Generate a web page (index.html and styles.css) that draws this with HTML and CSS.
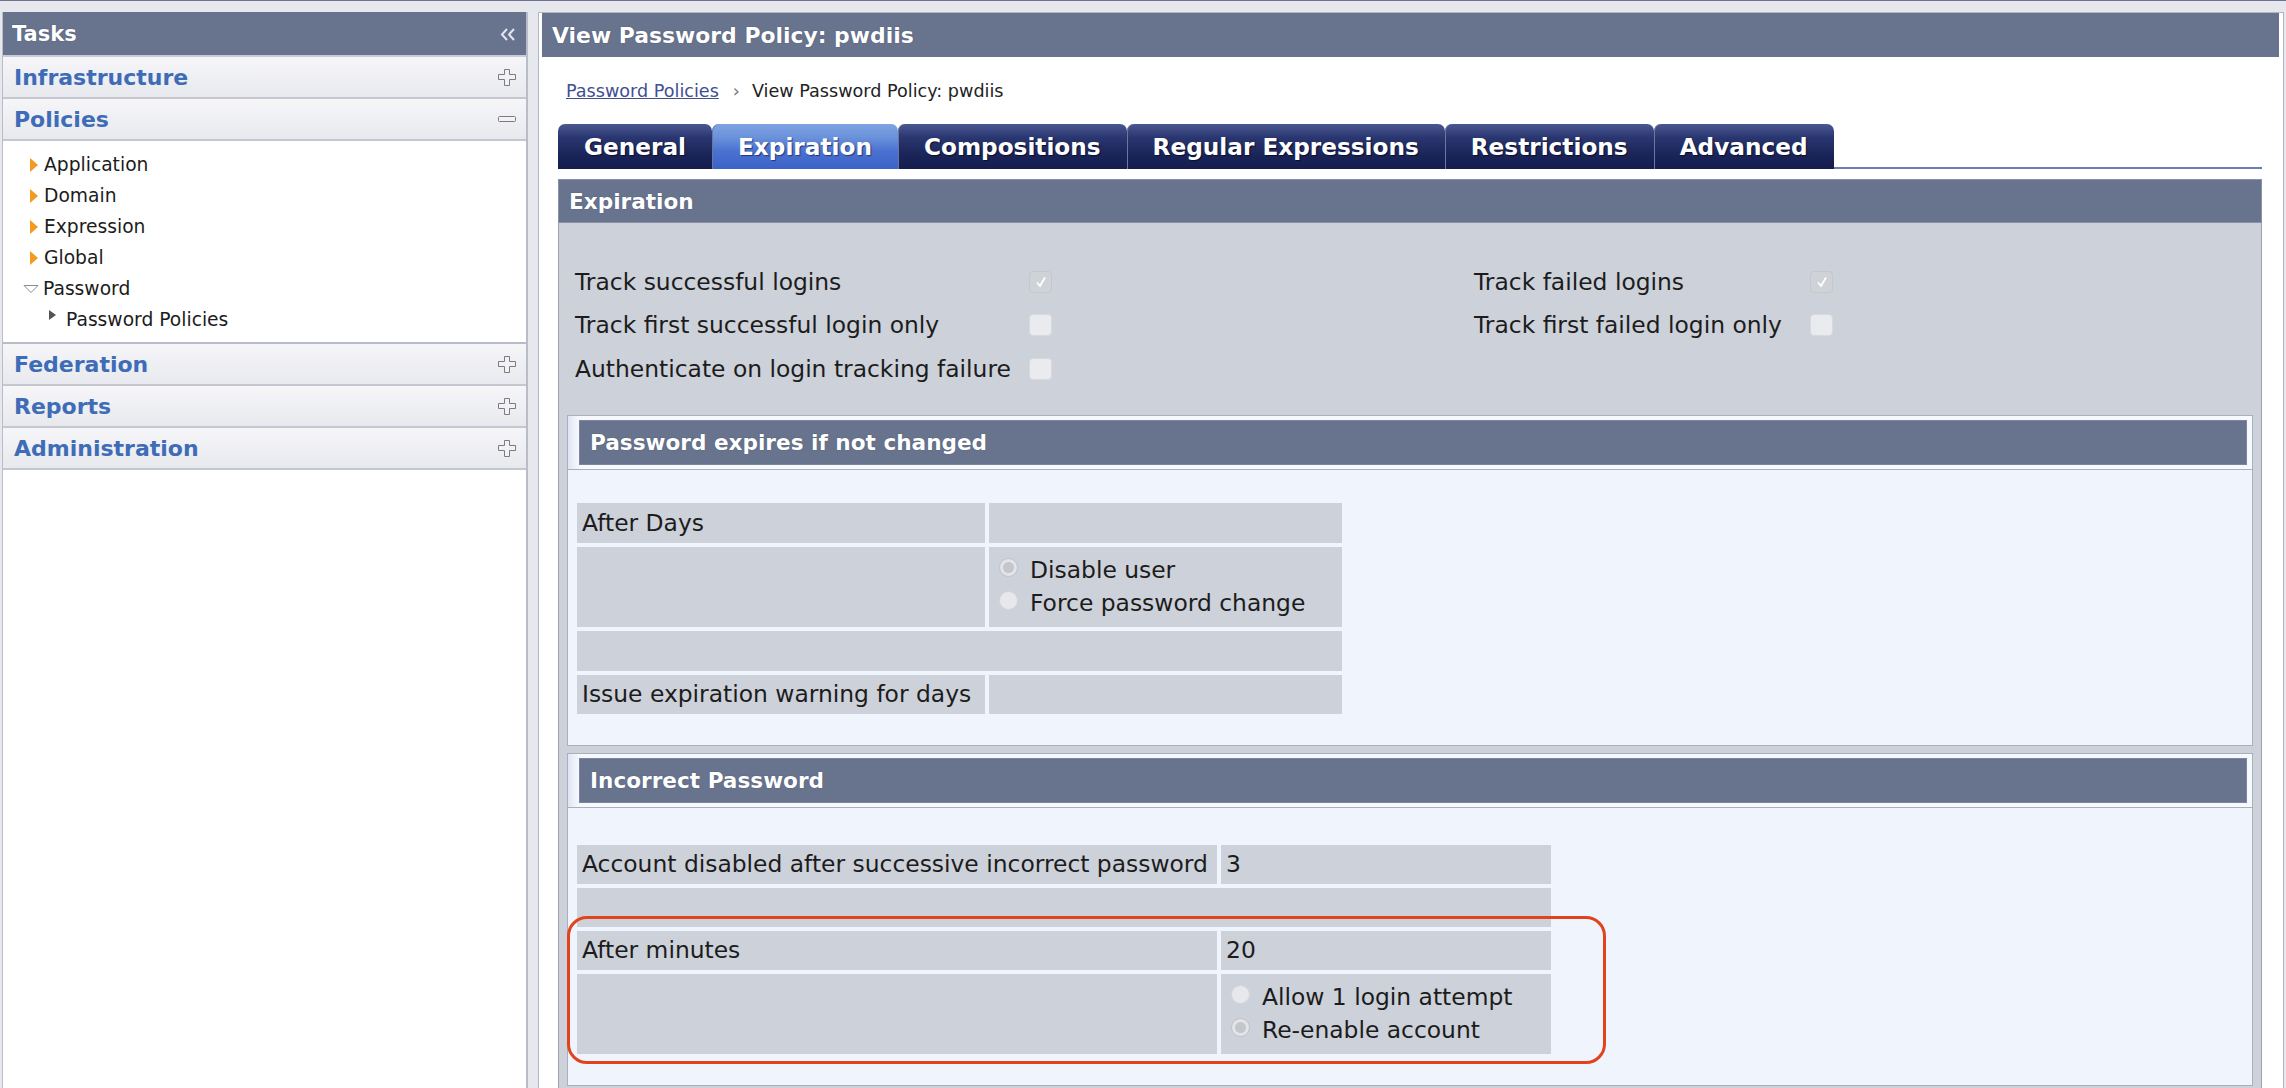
FILE: index.html
```html
<!DOCTYPE html>
<html>
<head>
<meta charset="utf-8">
<title>View Password Policy: pwdiis</title>
<link rel="stylesheet" href="styles.css">
</head>
<body>
<div class="page">
  <aside class="left">
    <div class="tasks-head">
      <span>Tasks</span>
      <svg class="collapse" width="16" height="13" viewBox="0 0 16 13"><polyline points="7,1 2,6.5 7,12" fill="none" stroke="#e3e6ef" stroke-width="2"/><polyline points="14,1 9,6.5 14,12" fill="none" stroke="#e3e6ef" stroke-width="2"/></svg>
    </div>
    <div class="acc-row"><span>Infrastructure</span><svg class="pm" width="18" height="17" viewBox="0 0 18 17"><polygon points="6.5,0.5 11.5,0.5 11.5,5.5 17.5,5.5 17.5,10.5 11.5,10.5 11.5,16.5 6.5,16.5 6.5,10.5 0.5,10.5 0.5,5.5 6.5,5.5" fill="#f2f2f4" stroke="#7c7c80"/></svg></div>
    <div class="acc-row"><span>Policies</span><svg class="pm" width="18" height="17" viewBox="0 0 18 17"><rect x="0.5" y="5.5" width="17" height="5" rx="1" fill="#f2f2f4" stroke="#7c7c80"/></svg></div>
    <ul class="tree">
      <li><span class="tri-o"></span>Application</li>
      <li><span class="tri-o"></span>Domain</li>
      <li><span class="tri-o"></span>Expression</li>
      <li><span class="tri-o"></span>Global</li>
      <li class="open"><svg class="tri-down" width="16" height="10" viewBox="0 0 16 10"><polygon points="1,1.5 15,1.5 8,8.5" fill="#fff" stroke="#8c8c8c"/></svg>Password</li>
      <li class="sub"><span class="tri-d"></span>Password Policies</li>
    </ul>
    <div class="acc-row"><span>Federation</span><svg class="pm" width="18" height="17" viewBox="0 0 18 17"><polygon points="6.5,0.5 11.5,0.5 11.5,5.5 17.5,5.5 17.5,10.5 11.5,10.5 11.5,16.5 6.5,16.5 6.5,10.5 0.5,10.5 0.5,5.5 6.5,5.5" fill="#f2f2f4" stroke="#7c7c80"/></svg></div>
    <div class="acc-row"><span>Reports</span><svg class="pm" width="18" height="17" viewBox="0 0 18 17"><polygon points="6.5,0.5 11.5,0.5 11.5,5.5 17.5,5.5 17.5,10.5 11.5,10.5 11.5,16.5 6.5,16.5 6.5,10.5 0.5,10.5 0.5,5.5 6.5,5.5" fill="#f2f2f4" stroke="#7c7c80"/></svg></div>
    <div class="acc-row"><span>Administration</span><svg class="pm" width="18" height="17" viewBox="0 0 18 17"><polygon points="6.5,0.5 11.5,0.5 11.5,5.5 17.5,5.5 17.5,10.5 11.5,10.5 11.5,16.5 6.5,16.5 6.5,10.5 0.5,10.5 0.5,5.5 6.5,5.5" fill="#f2f2f4" stroke="#7c7c80"/></svg></div>
    <div class="left-fill"></div>
  </aside>

  <main class="main">
    <div class="title-bar">View Password Policy: pwdiis</div>
    <div class="content">
      <div class="crumbs"><a href="#">Password Policies</a><span class="sep">›</span><span>View Password Policy: pwdiis</span></div>
      <div class="tabs">
        <div class="tab">General</div>
        <div class="tab active">Expiration</div>
        <div class="tab">Compositions</div>
        <div class="tab">Regular Expressions</div>
        <div class="tab">Restrictions</div>
        <div class="tab">Advanced</div>
      </div>
      <section class="sec">
        <div class="sec-head">Expiration</div>
        <div class="sec-body">
          <div class="checks">
            <span>Track successful logins</span><span class="cb on"><svg width="12" height="12" viewBox="0 0 12 12"><polyline points="2,6.5 5,10 10,1.5" fill="none" stroke="#fff" stroke-width="1.8"/></svg></span>
            <span></span>
            <span>Track failed logins</span><span class="cb on"><svg width="12" height="12" viewBox="0 0 12 12"><polyline points="2,6.5 5,10 10,1.5" fill="none" stroke="#fff" stroke-width="1.8"/></svg></span>
            <span>Track first successful login only</span><span class="cb"></span>
            <span></span>
            <span>Track first failed login only</span><span class="cb"></span>
            <span>Authenticate on login tracking failure</span><span class="cb"></span>
            <span></span><span></span><span></span>
          </div>

          <div class="box">
            <div class="box-head-wrap"><div class="box-head">Password expires if not changed</div></div>
            <div class="box-body">
              <div class="grid g1">
                <div class="cell">After Days</div><div class="cell"></div>
                <div class="cell"></div>
                <div class="cell radios">
                  <div class="ropt"><span class="rd on"></span>Disable user</div>
                  <div class="ropt"><span class="rd"></span>Force password change</div>
                </div>
                <div class="cell span2"></div>
                <div class="cell">Issue expiration warning for days</div><div class="cell"></div>
              </div>
            </div>
          </div>

          <div class="box box2">
            <div class="box-head-wrap"><div class="box-head">Incorrect Password</div></div>
            <div class="box-body">
              <div class="grid g2">
                <div class="cell">Account disabled after successive incorrect password</div><div class="cell">3</div>
                <div class="cell span2"></div>
                <div class="cell">After minutes</div><div class="cell">20</div>
                <div class="cell"></div>
                <div class="cell radios">
                  <div class="ropt"><span class="rd"></span>Allow 1 login attempt</div>
                  <div class="ropt"><span class="rd on"></span>Re-enable account</div>
                </div>
                <div class="highlight"></div>
              </div>
            </div>
          </div>
        </div>
      </section>
    </div>
  </main>
</div>
</body>
</html>
```

FILE: styles.css
```css
html, body {
  margin: 0;
  padding: 0;
  height: 100%;
  overflow: hidden;
}
body {
  background: #e7e8ee;
  border-top: 1px solid #6c7290;
  font-family: "DejaVu Sans", Verdana, sans-serif;
  color: #1c1c1c;
  box-sizing: border-box;
}
.page {
  display: flex;
  align-items: stretch;
  gap: 10px;
  padding: 11px 2px 0 2px;
  height: 1088px;
  box-sizing: border-box;
}

/* ---------- left task panel ---------- */
.left {
  width: 526px;
  flex: none;
  display: flex;
  flex-direction: column;
  background: #fff;
  border-left: 1px solid #b9bdc8;
  border-right: 2px solid #b9bdc8;
  box-sizing: border-box;
}
.left > * { flex-shrink: 0; }
.tasks-head {
  height: 43px;
  background: #68738e;
  color: #fff;
  font-weight: bold;
  font-size: 21px;
  display: flex;
  align-items: center;
  justify-content: space-between;
  padding: 0 10px 0 9px;
  border-bottom: 2px solid #c9ccd6;
  text-shadow: 0 0 1px #3b4360;
}
.collapse { margin-top: 1px; }
.acc-row {
  height: 40px;
  display: flex;
  align-items: center;
  justify-content: space-between;
  padding: 0 10px 0 11px;
  background: linear-gradient(#f6f6f9, #e8e9ee);
  border-bottom: 2px solid #c4c7d0;
  color: #3e6cb7;
  font-weight: bold;
  font-size: 22px;
}
.pm { flex: none; }
.tree {
  list-style: none;
  margin: 0;
  padding: 8px 0 7px 0;
  border-bottom: 2px solid #b8bcc6;
  font-size: 18.7px;
}
.tree li {
  height: 31px;
  display: flex;
  align-items: center;
  padding-left: 27px;
}
.tri-o {
  width: 0;
  height: 0;
  border-left: 8px solid #f29b1e;
  border-top: 7.5px solid transparent;
  border-bottom: 7.5px solid transparent;
  margin-right: 6px;
}
.tree li.open { padding-left: 20px; }
.tri-down { margin-right: 4px; }
.tree li.sub { padding-left: 46px; }
.tri-d {
  width: 0;
  height: 0;
  border-left: 7px solid #555;
  border-top: 5.5px solid transparent;
  border-bottom: 5.5px solid transparent;
  margin-right: 10px;
  margin-top: -9px;
}
.left-fill { flex: 1 1 auto; }

/* ---------- main panel ---------- */
.main {
  flex: 1;
  display: block;
  background: #fff;
  border: 1px solid #b3b7c3;
  border-bottom: none;
  min-width: 0;
  overflow: hidden;
}
.title-bar {
  height: 44px;
  margin: 0 4px 0 3px;
  background: #68738e;
  color: #fff;
  font-weight: bold;
  font-size: 21.9px;
  display: flex;
  align-items: center;
  padding-left: 10px;
  text-shadow: 0 0 1px #3b4360;
}
.content {
  padding: 0 21px 0 19px;
}
.crumbs {
  height: 67px;
  display: flex;
  align-items: center;
  padding-left: 8px;
  font-size: 17.6px;
  color: #222;
}
.crumbs a {
  color: #3f4f8f;
  text-decoration: underline;
}
.crumbs .sep {
  color: #777;
  margin: 0 12px 0 14px;
}

.tabs {
  display: flex;
  border-bottom: 2px solid #6f7cb4;
  height: 43px;
}
.tab {
  height: 45px;
  box-sizing: border-box;
  padding: 0 26px 0 26px;
  display: flex;
  align-items: center;
  font-weight: bold;
  font-size: 23.2px;
  color: #fff;
  border-radius: 7px 7px 0 0;
  background: linear-gradient(#4a5890 0%, #2a3670 30%, #1a2458 70%, #141d4e 100%);
  box-shadow: inset 1px 0 0 #6c76a0;
  text-shadow: 1px 1px 1px #0a0f30;
}
.tab:first-child { box-shadow: none; }
.tab.active {
  background: linear-gradient(#7fa3e2 0%, #6a91da 30%, #4a72d0 60%, #3c62c8 100%);
  text-shadow: 1px 1px 1px #22367a;
}

.sec {
  margin-top: 10px;
}
.sec-head {
  height: 44px;
  box-sizing: border-box;
  background: #68738e;
  border: 1px solid #8b92a6;
  color: #fff;
  font-weight: bold;
  font-size: 21.6px;
  display: flex;
  align-items: center;
  padding-left: 10px;
  text-shadow: 0 0 1px #3b4360;
}
.sec-body {
  background: #cdd1d9;
  border-left: 1px solid #9ca2b0;
  border-right: 1px solid #9ca2b0;
  padding: 37px 8px 30px 8px;
}

.checks {
  display: grid;
  grid-template-columns: 454px 23px 422px 336px 23px;
  grid-auto-rows: 43.5px;
  align-items: center;
  margin-left: 8px;
  font-size: 23.4px;
}
.cb {
  width: 23px;
  height: 22px;
  box-sizing: border-box;
  border-radius: 4px;
  background: #e9ebef;
  border: 1px solid #d6d9de;
  display: flex;
  align-items: center;
  justify-content: center;
}
.cb.on {
  background: #cfd2d7;
  border-color: #c4c7cd;
}

.box {
  margin-top: 24px;
  background: #f0f5fd;
  border: 1px solid #a9afbc;
}
.box2 { margin-top: 7px; }
.box-head-wrap {
  padding: 4px 5px 4px 11px;
  background: linear-gradient(90deg, #dfe6f3 0px, #f6f9fe 11px, #f6f9fe 100%);
  border-bottom: 1px solid #a9afbc;
}
.box-head {
  height: 45px;
  box-sizing: border-box;
  background: #68738e;
  border: 1px solid #7d86a0;
  color: #fff;
  font-weight: bold;
  font-size: 21.6px;
  display: flex;
  align-items: center;
  padding-left: 10px;
  text-shadow: 0 0 1px #3b4360;
}
.box-body {
  padding: 33px 0 31px 9px;
}
.box2 .box-body { padding-top: 37px; }
.grid {
  display: grid;
  gap: 4px;
  font-size: 23.4px;
  position: relative;
  width: max-content;
}
.g1 {
  grid-template-columns: 408px 353px;
  grid-template-rows: 40px 80px 40px 39px;
}
.g2 {
  grid-template-columns: 640px 330px;
  grid-template-rows: 39px 39px 39px 80px;
}
.cell {
  background: #cdd1d9;
  display: flex;
  align-items: center;
  padding-left: 5px;
  white-space: nowrap;
}
.span2 { grid-column: span 2; }
.radios {
  flex-direction: column;
  align-items: flex-start;
  justify-content: center;
  padding-left: 10px;
}
.ropt {
  height: 33px;
  display: flex;
  align-items: center;
}
.rd {
  width: 19px;
  height: 19px;
  box-sizing: border-box;
  border-radius: 50%;
  background: #e6e8ec;
  border: 1px solid #d3d6db;
  margin-right: 12px;
  margin-top: -6px;
}
.rd.on {
  background: radial-gradient(circle, #c3c6cc 0 5px, #e2e4e8 6px);
  border-color: #bfc3c9;
}
.highlight {
  position: absolute;
  left: -10px;
  top: 71px;
  width: 1039px;
  height: 148px;
  box-sizing: border-box;
  border: 3px solid #e2431c;
  border-radius: 20px;
  pointer-events: none;
}
```
